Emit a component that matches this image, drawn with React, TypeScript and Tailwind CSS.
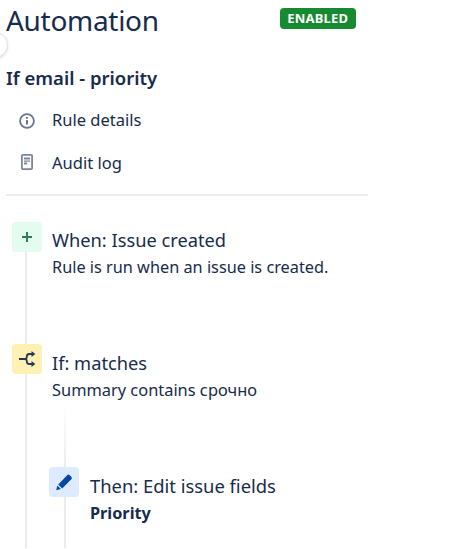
import React from "react";

function Line({ className = "" }: { className?: string }) {
  return <div className={`w-[2px] flex-1 bg-[#ebecf0] ${className}`} />;
}

export default function App() {
  return (
    <div className="relative h-[549px] w-[449px] overflow-hidden bg-white pl-[6px] text-[#172b4d] [font-family:'Noto_Sans','Open_Sans',sans-serif]">
      <div className="absolute left-[-18px] top-[32px] h-[26px] w-[26px] rounded-full border border-[#dfe1e6] bg-white shadow-sm" />

      <div className="flex h-[40px] w-[362px] items-start">
        <h1 className="text-[28px] font-normal leading-[40px] tracking-[-0.3px]">Automation</h1>
        <span className="ml-[121px] mt-[8px] flex h-[21px] w-[76px] items-center justify-center rounded-[4px] bg-[#158a30] text-[13px] font-bold tracking-[0.2px] text-white">
          ENABLED
        </span>
      </div>

      <h2 className="mt-[26px] text-[18.5px] font-semibold leading-[24px] text-[#172b4d]">If email - priority</h2>

      <div className="mt-[9px] flex h-[43px] items-center text-[16.5px]">
        <svg width="16" height="16" viewBox="0 0 16 16" className="ml-[13px] mr-[17px]" fill="none">
          <circle cx="8" cy="8" r="6.9" stroke="#6b778c" strokeWidth="1.8" />
          <rect x="7" y="7" width="2" height="4.5" rx="0.6" fill="#6b778c" />
          <circle cx="8" cy="4.9" r="1.1" fill="#6b778c" />
        </svg>
        Rule details
      </div>
      <div className="flex h-[43px] items-center text-[16.5px]">
        <svg width="16" height="18" viewBox="0 0 16 18" className="ml-[13px] mr-[17px] mb-[3px]" fill="none">
          <rect x="2.9" y="1.9" width="10.2" height="14.2" rx="1" stroke="#7a869a" strokeWidth="1.8" />
          <path d="M5 4.6h6v2H5zM5 7.4h6v1.3H5zM5 9.6h3.2v1.8H5z" fill="#7a869a" />
        </svg>
        Audit log
      </div>

      <div className="mt-[9px] h-[2px] w-[362px] bg-[#ebecf0]" />

      <div className="mt-[26px] ml-[6px] flex h-[122px]">
        <div className="flex w-[30px] flex-col items-center">
          <div className="flex h-[30px] w-[30px] items-center justify-center rounded-[4px] bg-[#e3fcef]">
            <svg width="12" height="12" viewBox="0 0 12 12">
              <path d="M5 1h2v4h4v2H7v4H5V7H1V5h4z" fill="#2f7d5b" />
            </svg>
          </div>
          <Line className="mr-[2px]" />
        </div>
        <div className="pl-[10px]">
          <div className="mt-[4px] text-[18.25px] leading-[28px]">When: Issue created</div>
          <div className="text-[16.3px] leading-[26px]">Rule is run when an issue is created.</div>
        </div>
      </div>

      <div className="ml-[6px] flex h-[204px]">
        <div className="flex w-[30px] flex-col items-center">
          <div className="flex h-[30px] w-[30px] items-center justify-center rounded-[4px] bg-[#fff0b3]">
            <svg width="30" height="30" viewBox="0 0 30 30" fill="none">
              <path d="M7 15h6c1.5 0 1.8-.8 1.8-2.2 0-1.8.7-2.8 2.4-2.8H20M13 15c1.5 0 1.8.8 1.8 2.2 0 1.8.7 2.8 2.4 2.8H20" stroke="#253858" strokeWidth="1.8" />
              <path d="M19.5 7l3.8 3-3.8 3zM19.5 17l3.8 3-3.8 3z" fill="#253858" />
            </svg>
          </div>
          <Line className="mr-[2px]" />
        </div>
        <div className="pl-[10px]">
          <div className="mt-[5px] text-[18.25px] leading-[28px]">If: matches</div>
          <div className="text-[16.4px] leading-[26px]">Summary contains срочно</div>
          <div className="ml-[-3px] flex h-[145px]">
            <div className="flex w-[30px] flex-col items-center">
              <div className="ml-[2px] h-[64px] w-[2px] bg-gradient-to-b from-white to-[#ebecf0]" />
              <div className="flex h-[30px] w-[30px] items-center justify-center rounded-[4px] bg-[#deebff]">
                <svg width="30" height="30" viewBox="0 0 30 30">
                  <path d="M18.2 8.2a1.8 1.8 0 0 1 2.5 0l1.6 1.6a1.8 1.8 0 0 1 0 2.5L13.2 21.4 9.2 17.4z" fill="#0747a6" />
                  <path d="M8.4 18.6l3.4 3.4-4.6 1.2z" fill="#0747a6" />
                </svg>
              </div>
              <Line className="ml-[2px]" />
            </div>
            <div className="pl-[11px] pt-[70px]">
              <div className="text-[18.4px] leading-[26px]">Then: Edit issue fields</div>
              <div className="text-[16.25px] font-bold leading-[28px]">Priority</div>
            </div>
          </div>
        </div>
      </div>
    </div>
  );
}
